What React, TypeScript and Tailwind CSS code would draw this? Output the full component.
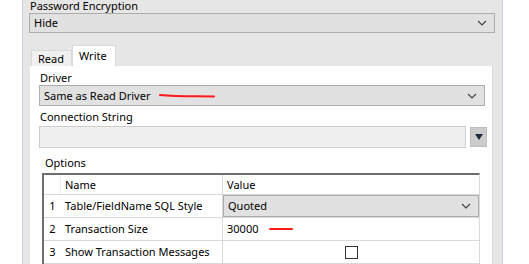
import React from 'react'

function Chevron() {
  return (
    <svg width="10" height="6" viewBox="0 0 10 6" className="shrink-0">
      <path d="M1 1 L5 5 L9 1" fill="none" stroke="#404040" strokeWidth="1.1" />
    </svg>
  )
}

function Combo({ text, className }: { text: string; className: string }) {
  return (
    <div
      className={`flex items-center justify-between bg-[#e1e1e1] border border-[#adadad] pl-[4px] pr-[7px] ${className}`}
    >
      <span className="whitespace-nowrap">{text}</span>
      <Chevron />
    </div>
  )
}

function Row({ n, name, children }: { n: string; name: string; children?: React.ReactNode }) {
  return (
    <div className="flex h-[23px] border-b border-[#d9d9d9]">
      <div className="w-[17px] flex items-center justify-center">{n}</div>
      <div className="w-[162px] flex items-center pl-[4px] border-r border-[#d9d9d9] whitespace-nowrap">{name}</div>
      <div className="flex-1 flex items-center">{children}</div>
    </div>
  )
}

export default function App() {
  return (
    <div
      className="relative w-[529px] h-[264px] flex bg-white overflow-hidden text-black text-[11px] leading-[14px]"
      style={{ fontFamily: '"Noto Sans", "Liberation Sans", sans-serif' }}
    >
      <div className="w-[22px] shrink-0 bg-white" />
      <div className="w-[481px] shrink-0 bg-[#e6e6e6] border-l border-r border-[#c9d0da] flex flex-col pl-[6px]">
        <div className="h-[13px] pl-[1px] leading-[12px] whitespace-nowrap">Password Encryption</div>
        <Combo text="Hide" className="w-[466px] h-[21px]" />

        {/* tabs */}
        <div className="flex h-[21px] mt-[12px] pl-[2px] items-end">
          <div className="w-[41px] h-[16px] bg-[#f0f0f0] border border-b-0 border-[#d9d9d9] flex items-center pl-[6px]">
            Read
          </div>
          <div className="w-[44px] h-[21px] bg-white border border-b-0 border-[#d9d9d9] flex items-center pl-[6px]">
            Write
          </div>
        </div>

        <div className="flex-1 w-[463px] ml-[1px] bg-white border-r border-[#d9d9d9] flex flex-col pl-[9px]">
          <div className="h-[13px] mt-[5px] pl-[1px]">Driver</div>
          <Combo text="Same as Read Driver" className="w-[446px] h-[21px] mt-[1px]" />
          <div className="h-[13px] mt-[4px] pl-[1px] whitespace-nowrap">Connection String</div>
          <div className="flex items-center mt-[3px] gap-[4px]">
            <div className="w-[427px] h-[22px] bg-[#f0f0f0] border border-[#cccccc]" />
            <div className="w-[17px] h-[20px] bg-[#cccccc] border border-[#bdbdbd] flex items-center justify-center">
              <svg width="8" height="6" viewBox="0 0 8 6">
                <path d="M0 0 H8 L4 6 Z" fill="#1f2a3a" />
              </svg>
            </div>
          </div>
          <div className="h-[13px] mt-[8px] pl-[6px]">Options</div>

          {/* options grid */}
          <div className="w-[438px] mt-[4px] ml-[3px] border-t-2 border-l-2 border-[#6e6e6e] border-r border-r-[#d9d9d9]">
            <div className="flex h-[20px] border-b border-[#d9d9d9]">
              <div className="w-[17px] border-r border-[#eeeeee]" />
              <div className="w-[162px] flex items-center pl-[4px] border-r border-[#d9d9d9]">Name</div>
              <div className="flex-1 flex items-center pl-[4px]">Value</div>
            </div>
            <Row n="1" name="Table/FieldName SQL Style">
              <Combo text="Quoted" className="w-full h-[22px] mt-[-1px]" />
            </Row>
            <Row n="2" name="Transaction Size">
              <span className="pl-[4px]">30000</span>
              <span className="ml-[11px] w-[24px] h-[2px] bg-[#ff1a1a] rounded-full" />
            </Row>
            <Row n="3" name="Show Transaction Messages">
              <div className="ml-[122px] w-[13px] h-[13px] border border-[#333333] bg-white" />
            </Row>
          </div>
        </div>
      </div>
      <div className="flex-1 bg-white" />
      {/* red annotation on driver */}
      <svg className="absolute left-[158px] top-[93px]" width="60" height="6" viewBox="0 0 60 6">
        <path d="M2 2 C 20 4, 40 3, 56 3.5" stroke="#ff1a1a" strokeWidth="2" fill="none" strokeLinecap="round" />
      </svg>
    </div>
  )
}
